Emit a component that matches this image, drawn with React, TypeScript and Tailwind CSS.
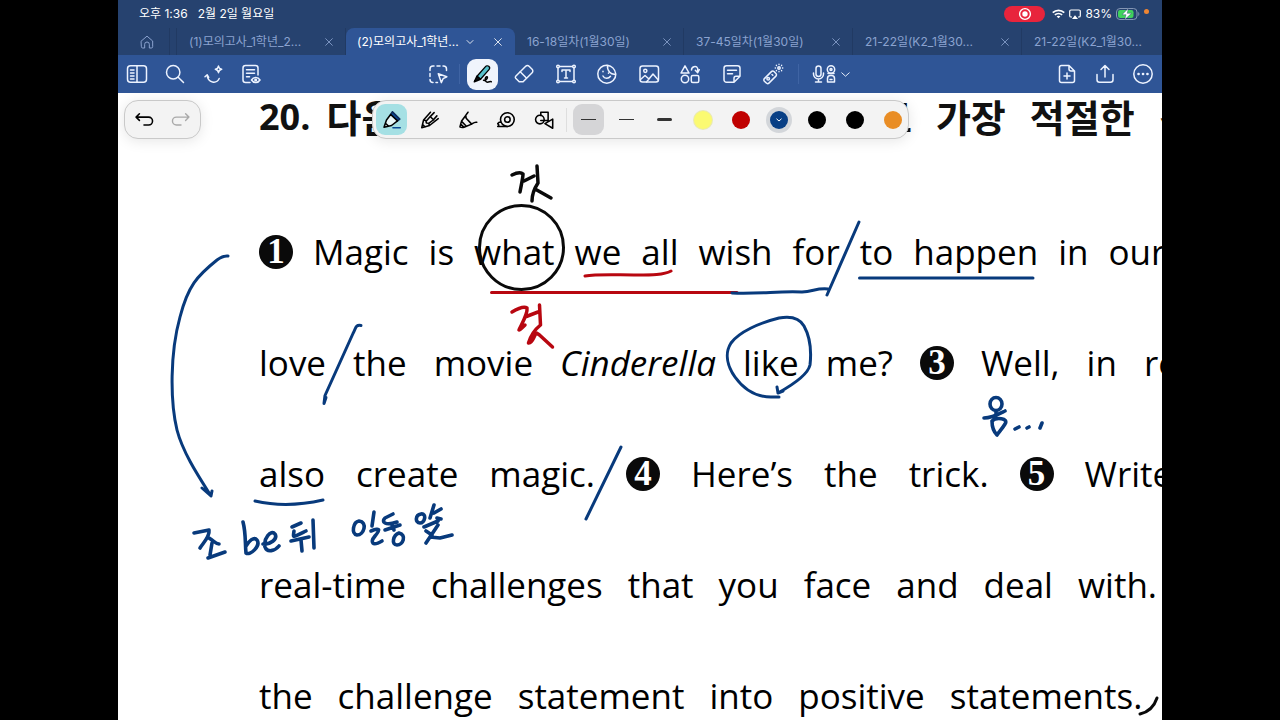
import type { ReactNode } from "react";

function Icon({ children, className = "size-6", width = 1.5 }: { children: ReactNode; className?: string; width?: number }) {
  return (
    <svg viewBox="0 0 24 24" className={`${className} shrink-0`} fill="none" stroke="currentColor" strokeWidth={width} strokeLinecap="round" strokeLinejoin="round" aria-hidden="true">
      {children}
    </svg>
  );
}

const tabs = [
  { title: "(1)모의고사_1학년_2...", active: false },
  { title: "(2)모의고사_1학년...", active: true },
  { title: "16-18일차(1월30일)", active: false },
  { title: "37-45일차(1월30일)", active: false },
  { title: "21-22일(K2_1월30...", active: false },
  { title: "21-22일(K2_1월30...", active: false },
];

function StatusBar() {
  return (
    <div className="flex h-7 items-center justify-between pr-[11px] pl-[21px] text-xs text-white">
      <div className="flex gap-[10px]">
        <span>오후 1:36</span>
        <span>2월 2일 월요일</span>
      </div>
      <div className="flex items-center gap-1">
        <span className="flex h-4 w-[41px] items-center justify-center rounded-full bg-[#e8243c]">
          <svg viewBox="0 0 14 14" className="size-[14px]" aria-hidden="true">
            <circle cx="7" cy="7" r="5.4" fill="none" stroke="#fff" strokeWidth="1.4" />
            <circle cx="7" cy="7" r="2.7" fill="#fff" />
          </svg>
        </span>
        <svg viewBox="0 0 14 10" className="ml-[3px] h-[10px] w-[13px]" fill="none" stroke="#fff" strokeWidth="1.8" aria-hidden="true">
          <path d="M.8 3.6C4.3.3 9.7.3 13.2 3.6M3.1 6c2.2-2 5.600-2 7.800 0" />
          <path d="M7 9.600 5 7.600c1.100-1 2.900-1 4 0z" fill="#fff" stroke="none" />
        </svg>
        <svg viewBox="0 0 12 11" className="h-[11px] w-3" fill="none" stroke="#fff" strokeWidth="1.200" strokeLinejoin="round" aria-hidden="true">
          <path d="M3 8H2A1.300 1.300 0 0 1 .700 6.700V2.300A1.300 1.300 0 0 1 2 1h8a1.300 1.300 0 0 1 1.300 1.300v4.400A1.300 1.300 0 0 1 10 8H9" />
          <path d="m6 6.300 3 3.700H3z" fill="#fff" stroke="none" />
        </svg>
        <span>83%</span>
        <svg viewBox="0 0 24 12" className="h-3 w-6" aria-hidden="true">
          <rect x=".5" y=".5" width="20.500" height="11" rx="3.500" fill="none" stroke="#8496b4" />
          <rect x="2" y="2" width="15.500" height="8" rx="2.200" fill="#3fd25c" />
          <path d="M22.300 4v4c1.400-.6 1.400-3.400 0-4z" fill="#8496b4" />
          <path d="M12.300.5 6 6.700h4l-1.200 4.800L15.500 5.300h-4.300z" fill="#fff" stroke="#26426f" strokeWidth=".4" />
        </svg>
        <span className="mr-[2px] mb-[6px] size-[5px] rounded-full bg-[#ef8532]" />
      </div>
    </div>
  );
}

function TabBar() {
  return (
    <nav className="flex h-[27px] overflow-hidden text-[#8ba3d0]">
      <button aria-label="Home" className="flex w-[52px] shrink-0 items-center justify-center border-r border-[#213a63] pl-[7px]">
        <Icon className="size-4">
          <path d="M3.500 10.500 12 3.200l8.500 7.300V19a2 2 0 0 1-2 2h-3v-5.500a3.500 3.500 0 0 0-7 0V21h-3a2 2 0 0 1-2-2z" />
        </Icon>
      </button>
      <span className="w-[7px] shrink-0 border-r border-[#213a63]" />
      {tabs.map((tab, i) => (
        <div
          key={i}
          className={
            tab.active
              ? "flex w-[169px] shrink-0 items-center justify-between rounded-t-lg bg-[#2f5596] pr-3 pl-[11px] text-white"
              : "flex w-[169px] shrink-0 items-center justify-between border-r border-[#213a63] pr-[11px] pl-3"
          }
        >
          <button className="text-xs whitespace-nowrap">{tab.title}</button>
          {tab.active && (
            <Icon className="mr-3 size-[8px]" width={2.500}>
              <path d="m3 7.500 9 9 9-9" />
            </Icon>
          )}
          <button aria-label="Close tab">
            <Icon className="size-[10px]" width={2}>
              <path d="m4 4 16 16M20 4 4 20" />
            </Icon>
          </button>
        </div>
      ))}
    </nav>
  );
}

const leftTools = [
  {
    name: "Sidebar",
    art: (
      <>
        <rect x="2.500" y="3.700" width="19" height="16.600" rx="3" />
        <path d="M12 4v16M5.500 8H9M5.500 11H9M5.500 14H9M5.500 17H9" />
      </>
    ),
  },
  {
    name: "Search",
    art: (
      <>
        <circle cx="10.200" cy="10.200" r="6.700" />
        <path d="m15.200 15.200 5.300 5.300" />
      </>
    ),
  },
  {
    name: "Assistant",
    art: (
      <>
        <path d="M4 14.800l2.200-2 1.500 2.500M6.200 13c.6 8.500 9.500 9 12 3.500" />
        <path d="M17.500 4c.3 2 1.200 3 3.200 3.300-2 .4-2.900 1.400-3.200 3.400-.4-2-1.300-3-3.200-3.400 1.900-.3 2.800-1.300 3.200-3.300z" strokeWidth="1.400" />
      </>
    ),
  },
  {
    name: "Outline",
    art: (
      <>
        <path d="M11 20.500H6.500a2.500 2.500 0 0 1-2.500-2.500V6a2.500 2.500 0 0 1 2.500-2.500h10A2.500 2.500 0 0 1 19 6v7" />
        <path d="M7.500 7.700h8M7.500 11.200h8M7.500 14.700h3" />
        <path d="M12.500 18c2-3.300 6.500-3.300 8.500 0-2 3.300-6.500 3.300-8.500 0z" />
        <circle cx="16.700" cy="18" r=".8" />
      </>
    ),
  },
];

const mainTools = [
  {
    name: "Eraser",
    art: (
      <>
        <path d="m3.700 14.300 10-10a2.400 2.400 0 0 1 3.400 0l3 3a2.400 2.400 0 0 1 0 3.400l-9 9H7.200l-3.500-3.500a1.500 1.500 0 0 1 0-1.900z" />
        <path d="m8.200 9.800 6.200 6.200" />
      </>
    ),
  },
  {
    name: "Text",
    art: (
      <>
        <path d="M5 4.500h14M5 19.500h14M4 5.500v13M20 5.500v13" />
        <path d="M8 9.500V8h8v1.500M12 8v8M10.500 16h3" />
        <g fill="#2f5596">
          <circle cx="4" cy="4.500" r="1.300" />
          <circle cx="20" cy="4.500" r="1.300" />
          <circle cx="4" cy="19.500" r="1.300" />
          <circle cx="20" cy="19.500" r="1.300" />
        </g>
      </>
    ),
  },
  {
    name: "Sticker",
    art: (
      <>
        <path d="M12.500 3.200A9 9 0 1 0 20.800 12c-4.500 1.200-9-3-8.300-8.800zM12.500 3.200c4 .6 7.600 4 8.300 8.800" />
        <path d="M8 14c1.500 3 5.500 3 7.500.3M8 9.300v.4M13.500 11v.3" />
      </>
    ),
  },
  {
    name: "Image",
    art: (
      <>
        <rect x="3" y="4" width="18.500" height="16" rx="2.500" />
        <circle cx="8.300" cy="8.800" r="1.600" />
        <path d="m3.500 17.500 4.500-4 4 3.500M9.500 20l6.500-8 5.300 6" />
      </>
    ),
  },
  {
    name: "Elements",
    art: (
      <>
        <path d="M7 3.800 11 11H3z" />
        <rect x="13.300" y="13.500" width="7.500" height="7" rx="1.500" />
        <circle cx="7" cy="17" r="3.700" />
        <path d="M13.500 8c0-3 4.500-5 6.200-1.500V10M17.300 8.200l2.400 2.500 1.600-3" />
      </>
    ),
  },
  {
    name: "Note",
    art: (
      <>
        <path d="M14 20.200H6.500A2.500 2.500 0 0 1 4 17.700V6.300a2.500 2.500 0 0 1 2.500-2.500h11A2.500 2.500 0 0 1 20 6.300v8zM14 20v-3.700a2 2 0 0 1 2-2h4" />
        <path d="M7.500 8.300h9M7.500 11.800h5" />
      </>
    ),
  },
  {
    name: "Laser pointer",
    art: (
      <>
        <path d="m3.400 16.600 7-7a1.800 1.800 0 0 1 2.600 0l1.900 1.900a1.800 1.800 0 0 1 0 2.600l-7 7a1.800 1.800 0 0 1-2.600 0l-1.900-1.900a1.800 1.800 0 0 1 0-2.600z" />
        <circle cx="7.200" cy="16.800" r="1.300" />
        <path d="m11 12.500.8.800" />
        <circle cx="18" cy="6" r="1.200" />
        <path d="M18 2.200v.3M18 9.500v.3M14.200 6h.3M21.500 6h.3M15.300 3.300l.2.200M20.500 8.500l.2.200M15.500 8.500l-.2.200M20.700 3.300l-.2.200" strokeWidth="1.300" />
      </>
    ),
  },
];

const rightTools = [
  {
    name: "Add page",
    art: (
      <>
        <path d="M6.500 3.500h7.500l5.500 5.500v9.500a2 2 0 0 1-2 2h-11a2 2 0 0 1-2-2v-13a2 2 0 0 1 2-2zM14 3.500V7a2 2 0 0 0 2 2h3.500" />
        <path d="M12 11v6M9 14h6" />
      </>
    ),
  },
  {
    name: "Share",
    art: <path d="M12 15V3.800M8 7.500l4-4 4 4M4 12.500v5.300a2.500 2.500 0 0 0 2.500 2.500h11a2.500 2.500 0 0 0 2.500-2.500v-5.300" />,
  },
  {
    name: "More",
    art: (
      <>
        <circle cx="12" cy="12" r="9.200" />
        <path d="M7.500 12h.1M12 12h.1M16.400 12h.1" strokeWidth="2.600" />
      </>
    ),
  },
];

function Toolbar() {
  return (
    <div className="flex h-[38px] items-center bg-[#2f5596] text-[#edf3ff]">
      {leftTools.map((t) => (
        <button key={t.name} aria-label={t.name} className="flex w-[38px] justify-center">
          <Icon>{t.art}</Icon>
        </button>
      ))}
      <div className="flex flex-1 items-center justify-center pr-[49px]">
        <button aria-label="Select" className="flex w-[38px] justify-center">
          <Icon>
            <path d="M4 8.500V7a3 3 0 0 1 3-3h1M11 4h3M17 4h.5a3 3 0 0 1 3 3v1.500M4 11.500v3M4 17.500a3 3 0 0 0 3 3M10 20.500h1.500" />
            <path d="m12.300 11.800 8.500 3-3.700 1.900-1.800 3.900z" />
          </Icon>
        </button>
        <span className="mx-[2px] h-5 w-px bg-[#3f64a4]" />
        <div className="grid w-[332px] grid-cols-8 items-center justify-items-center">
          <button aria-label="Pen" className="flex size-[31px] items-center justify-center rounded-[9px] bg-[#f0f4fc] text-black">
            <Icon>
              <path d="M6 14.200 14.500 4.600a2.300 2.300 0 0 1 3.500 3L9.500 17.200z" fill="#58c1cd" strokeWidth="1.300" />
              <path d="M6 14.200 3.300 19.800l6.200-2.600z" fill="#111" />
              <path d="M12.500 18.300c2.500.6 5-2.800 3.500-3.600-2-.6-3 5.400.5 5.500 1.700 0 2.500-1 3.800-.5" />
            </Icon>
          </button>
          {mainTools.map((t) => (
            <button key={t.name} aria-label={t.name} className="flex justify-center">
              <Icon>{t.art}</Icon>
            </button>
          ))}
        </div>
        <span className="mx-1 h-5 w-px bg-[#3f64a4]" />
        <button aria-label="Record audio" className="flex items-center gap-1 pl-2">
          <svg viewBox="0 0 26 24" className="h-6 w-[26px]" fill="none" stroke="currentColor" strokeWidth="1.500" strokeLinecap="round" strokeLinejoin="round" aria-hidden="true">
            <rect x="5" y="4" width="5" height="10.500" rx="2.500" />
            <path d="M2.500 11v1a5 5 0 0 0 10 0v-1M7.500 17v3M4.500 20h6" />
            <circle cx="20" cy="7.500" r="3.700" />
            <circle cx="20" cy="7.500" r="1" />
            <path d="M16.500 20v-3.500a3 3 0 0 1 3-3h1a3 3 0 0 1 3 3V20zM19 17.500h2M17 11.500h6" />
          </svg>
          <Icon className="size-[9px]" width={2.500}>
            <path d="m2 7.500 10 9 10-9" />
          </Icon>
        </button>
      </div>
      {rightTools.map((t) => (
        <button key={t.name} aria-label={t.name} className="flex w-[38px] justify-center">
          <Icon>{t.art}</Icon>
        </button>
      ))}
    </div>
  );
}

const pens = [
  {
    name: "Highlighter",
    active: true,
    art: (
      <>
        <path d="M12.500 3 20.500 11l-2.500 2L10.500 6z" fill="#0b4a94" stroke="#0b2a5a" />
        <path d="M10.500 6 6 12l-2.700 8 8.200-2 6.500-5zM4.900 15.500l3.500 3.300" fill="#e9f7f8" />
        <path d="M13 20.500h8" stroke="#0b4a94" />
      </>
    ),
  },
  {
    name: "Pencil",
    active: false,
    art: <path d="M12.500 3.500 5 12 3 20.500l8.500-2.500 9.500-7.500M5 12l2.500.5.500 2.700 2.500.4 1 2.400M8.500 12.500l4-4.500 4-4M11 15.500l4.500-3.500 4-4.500M12.500 8.500l3.500 3.500M4 17l2.500 2.500" />,
  },
  {
    name: "Brush pen",
    active: false,
    art: <path d="M12 3.500 9.500 7l-4.500 6M9.500 7l.5 3 6 6.500M5 13l-1.800 6.500c1.500 1 3 .8 4.500.5l8.300-3.500c1.500-1 3-2.500 5.500-2M5 13.500l5 5M4 16.500l3.500 3.300" />,
  },
  {
    name: "Tape",
    active: false,
    art: (
      <>
        <circle cx="13.500" cy="11.500" r="7.500" />
        <circle cx="13.500" cy="11.500" r="3" />
        <path d="M13.500 19H3l1.200-1.500L3 16l1.500-1.500h2.200" />
      </>
    ),
  },
  {
    name: "Shape pen",
    active: false,
    art: (
      <>
        <circle cx="7.500" cy="11.500" r="4.700" />
        <path d="M8.500 7V3.500h8v9H8.500M13 16l8.500-5v10z" />
      </>
    ),
  },
];

const swatches = [
  { name: "Yellow", className: "size-[18px] rounded-full bg-[#fbfa72] ring-1 ring-[#e9e9b4]" },
  { name: "Red", className: "size-[18px] rounded-full bg-[#c00000]" },
  { name: "Blue", className: "flex size-[18px] items-center justify-center rounded-full bg-[#083f85] text-white ring-4 ring-[#d3d6da]" },
  { name: "Black", className: "size-[18px] rounded-full bg-black" },
  { name: "Black 2", className: "size-[18px] rounded-full bg-black" },
  { name: "Orange", className: "size-[18px] rounded-full bg-[#e98d25]" },
];

function PenBar() {
  return (
    <div className="absolute top-[7px] left-[254px] flex h-[39px] items-center gap-[7px] rounded-[14px] border border-[#c9c9c9] bg-[#f3f3f3] pl-[3px] shadow-[0_2px_14px_rgba(0,0,0,0.1)]">
      {pens.map((p) => (
        <button
          key={p.name}
          aria-label={p.name}
          className={p.active ? "flex size-[31px] items-center justify-center rounded-[9px] bg-[#a5e0e4]" : "flex size-[31px] items-center justify-center"}
        >
          <Icon className="size-[22px]" width={1.700}>{p.art}</Icon>
        </button>
      ))}
      <span className="-mr-px h-6 w-px bg-[#dedede]" />
      <button aria-label="Thin stroke" className="flex size-[31px] items-center justify-center rounded-[9px] bg-[#d5d5d7]">
        <span className="h-px w-[15px] bg-[#333]" />
      </button>
      <button aria-label="Medium stroke" className="flex size-[31px] items-center justify-center">
        <span className="h-px w-[15px] bg-[#333]" />
      </button>
      <button aria-label="Thick stroke" className="flex size-[31px] items-center justify-center">
        <span className="h-[3px] w-[15px] rounded-full bg-[#333]" />
      </button>
      {swatches.map((s) => (
        <button key={s.name} aria-label={s.name} className="flex size-[31px] items-center justify-center">
          <span className={s.className}>
            {s.name === "Blue" && (
              <Icon className="size-[6px]" width={4}>
                <path d="m3 8 9 8 9-8" />
              </Icon>
            )}
          </span>
        </button>
      ))}
    </div>
  );
}

function HistoryBar() {
  return (
    <div className="absolute top-[7px] left-[6px] flex h-[39px] w-[77px] items-center justify-around rounded-[14px] border border-[#c9c9c9] bg-[#f3f3f3] shadow-[0_2px_14px_rgba(0,0,0,0.1)]">
      <button aria-label="Undo" className="text-black">
        <Icon className="size-5" width={1.900}>
          <path d="M6.500 4.500 2.500 8.500l4 4M3 8.500h14.500a4.500 4.500 0 0 1 0 9.500H12" />
        </Icon>
      </button>
      <button aria-label="Redo" className="text-[#a9a9a9]">
        <Icon className="size-5" width={1.700}>
          <path d="m17.500 4.500 4 4-4 4M21 8.500H6.500a4.500 4.500 0 0 0 0 9.500H12" />
        </Icon>
      </button>
    </div>
  );
}

function Num({ children }: { children: ReactNode }) {
  return (
    <span className="flex size-[34px] shrink-0 items-center justify-center rounded-full bg-[#0a0a0a] font-['Liberation_Serif',serif] text-[35px] leading-none font-bold text-white">
      {children}
    </span>
  );
}

function Words({ text }: { text: string }) {
  return (
    <>
      {text.split(" ").map((w, i) => (
        <span key={i}>{w}</span>
      ))}
    </>
  );
}

function Passage() {
  return (
    <article className="pl-[141px] font-['Open_Sans','Noto_Sans_CJK_KR',sans-serif] whitespace-nowrap text-[#111]">
      <h1 className="flex h-[103px] gap-4 text-[38px] leading-[48px] font-bold">
        <span className="text-4xl leading-[48px]">20.</span>
        <span className="flex gap-6">
          <Words text="다음 글에서 필자가 주장하는 바로 가장 적절한 것은?" />
        </span>
      </h1>
      <div className="text-[35px] leading-[111px] text-black">
        <p className="flex h-[111px] items-center gap-5">
          <Num>1</Num>
          <Words text="Magic is what we all wish for to happen in our" />
        </p>
        <p className="flex h-[111px] items-center gap-[27px]">
          <Words text="love the movie" />
          <em>Cinderella</em>
          <Words text="like me?" />
          <Num>3</Num>
          <Words text="Well, in reality" />
        </p>
        <p className="flex h-[111px] items-center gap-[31px]">
          <Words text="also create magic." />
          <Num>4</Num>
          <Words text="Here’s the trick." />
          <Num>5</Num>
          <span>Write</span>
        </p>
        <p className="flex h-[111px] items-center gap-[25px]">
          <Words text="real-time challenges that you face and deal with." />
        </p>
        <p className="flex h-[111px] items-center gap-[25px]">
          <Words text="the challenge statement into positive statements." />
        </p>
      </div>
    </article>
  );
}

function Ink() {
  return (
    <svg viewBox="118 93 1044 627" className="pointer-events-none absolute top-0 left-0 h-[627px] w-[1044px]" fill="none" strokeLinecap="round" strokeLinejoin="round" strokeWidth="3" aria-hidden="true">
      <g stroke="#0a0a0a">
        <circle cx="521.500" cy="247.500" r="42" />
        <path d="M512 175c4-2 9-3 11-1 0 4-2 12-3 18M524 181l10-5M537 166l1 17c-4 6-6 11-6 18M535 189l16 9" strokeWidth="3.500" />
        <path d="M1157 698c-3 9-8 14-17 16" />
      </g>
      <g stroke="#b80710">
        <path d="M585 276c12-2 30-1 52-1 14 0 27 0 34-4M491.500 292.500H737" />
        <path d="M512 312c5-3 12-6 15-4 1 6-6 17-8 22 1 0 5-4 6-5M525 317l13-5M539.500 305l1 20c-5 4-10 11-12 18 5-1 4-5 8-10l3 2 13 12" strokeWidth="3.500" />
      </g>
      <g stroke="#083a7c">
        <path d="M732 293c32 1 44-2 70-1 12-1 15-4 26-3M859 222l-32 73M859.500 278H1033" />
        <path d="M228 256c-4-.5-7 1-11 4-20 16-29 26-37 57-10 36-10 84-3 113 6 23 22 47 34 66M202 488l9 8 1-5" />
        <path d="M361 325.500c-6-1-5 3-8 8l-28 62-1 8 2-6" />
        <path d="M778 393c18-10 30-19 32-28 2-18-1-30-6-39-5-9-14-10-25-8-20 5-40 14-48 25-7 11-3 24 4 34 10 14 21 20 36 20h8M777 387l1 6 5-2" />
        <path d="M621 447l-35 72M255 501c22 5 46 4 68-1" />
        <g strokeWidth="3.600">
          <ellipse cx="996" cy="404" rx="6" ry="6.500" />
          <path d="M984 418c8 0 15-4 21-7M996 412v6M992 421c4-4 17-3 13 3-3 5-6 8-8 11-3-3-5-8-5-14M1015 429l4-2M1027 428l2-1M1040 428l2-5" />
          <path d="M194 533l15-3c1 7-6 13-9 18M209 538c6 4 7 6 10 6M212 543l-2 12M208 558l17-6" />
          <path d="M243 522c3 11 2 22 3 31 4 3 15-7 11-13-3-4-8 1-11 6M263 544c7 1 15-5 12-10-4-5-12 5-10 13 2 6 10 4 14-1" />
          <path d="M292 527l9-4M294 531c-1 7-2 7 12 0M291 541l18-4M301 540l1 11M313 520l1 28" />
          <path d="M359 521c-6 1-8 13-2 14 7 0 11-13 2-14zM374 512l-2 14M371 531c10-4 9-1 4 5s-3 11 7 5" />
          <path d="M393 514l-8 4c-4 4 0 8 12 4M385 530l15-5M392 525l2 5M399 533c-6 2-8 12-2 12s10-10 2-12z" />
          <path d="M421 514c-6 1-6 9-1 9s7-10 1-9zM434 505l-4 13M434 513l7-4M437 518l4 1M424 527l14-6M426 531l6 4M438 525l-12 18M430 537l10 1 12-3" />
        </g>
      </g>
    </svg>
  );
}

export default function App() {
  return (
    <div className="h-screen overflow-hidden bg-black px-[118px]">
      <main className="flex h-full flex-col overflow-hidden bg-white font-['Inter','Noto_Sans_CJK_KR',sans-serif]">
        <header className="shrink-0 bg-[#26426f]">
          <StatusBar />
          <TabBar />
          <Toolbar />
        </header>
        <section className="relative flex-1 overflow-hidden">
          <Passage />
          <Ink />
          <HistoryBar />
          <PenBar />
        </section>
      </main>
    </div>
  );
}
